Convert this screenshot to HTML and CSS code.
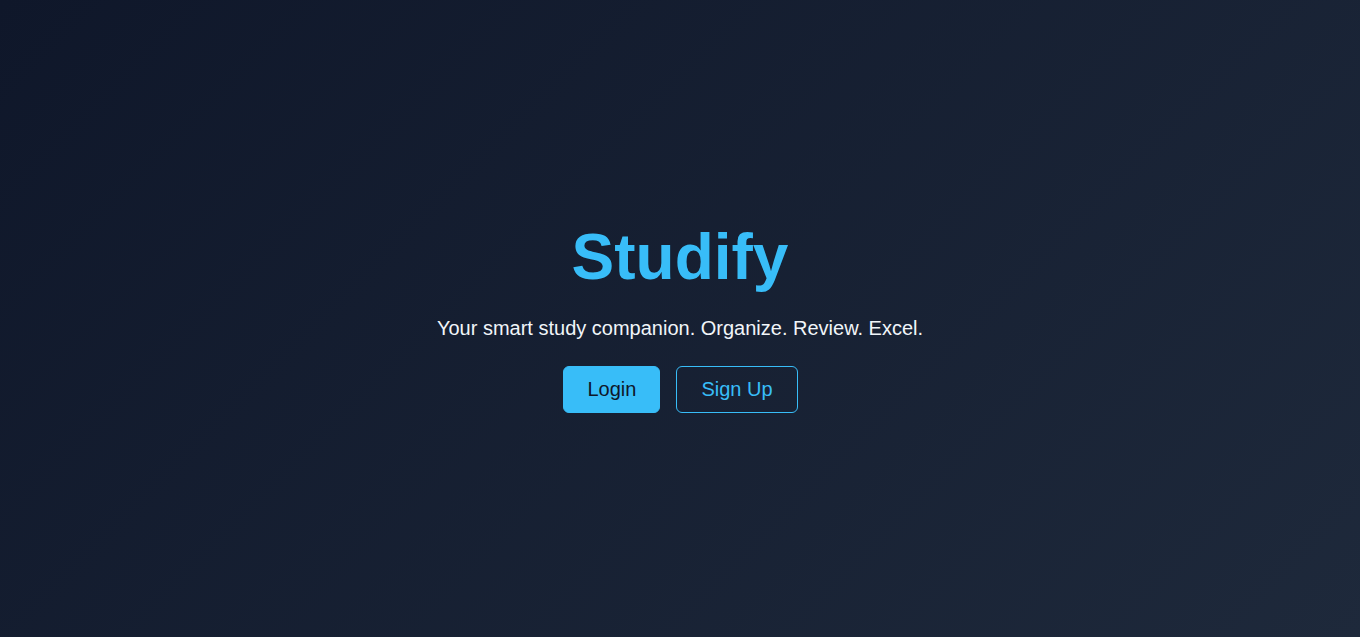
FILE: index.html
```html
<!DOCTYPE html>
<html lang="en">
<head>
<meta charset="utf-8">
<title>Studify</title>
<link rel="stylesheet" href="styles.css">
</head>
<body>
<main class="hero">
  <h1 class="title">Studify</h1>
  <p class="tagline">Your smart study companion. Organize. Review. Excel.</p>
  <div class="actions">
    <a class="btn btn-primary" href="#">Login</a>
    <a class="btn btn-outline" href="#">Sign Up</a>
  </div>
</main>
</body>
</html>
```
FILE: styles.css
```css
* { box-sizing: border-box; }
html, body { height: 100%; }
body {
  margin: 0;
  font-family: "Liberation Sans", Arial, sans-serif;
  background: linear-gradient(135deg, #0f172a 0%, #1e293b 100%);
  color: #f1f5f9;
}
.hero {
  min-height: 100vh;
  padding-bottom: 5px;
  display: flex;
  flex-direction: column;
  align-items: center;
  justify-content: center;
  text-align: center;
}
.title {
  margin: 0 0 23px;
  font-size: 64px;
  font-weight: 700;
  color: #38bdf8;
}
.tagline {
  margin: 0 0 26px;
  font-size: 20px;
  color: #f1f5f9;
}
.actions {
  display: flex;
  gap: 16px;
  padding-left: 1px;
}
.btn {
  display: inline-block;
  font-size: 20px;
  line-height: 23px;
  padding: 11px 23px;
  border-radius: 6px;
  border: 1px solid #38bdf8;
  text-decoration: none;
}
.btn-primary {
  background: #38bdf8;
  color: #0f172a;
}
.btn-outline {
  background: transparent;
  color: #38bdf8;
  padding: 11px 24px;
}
```
